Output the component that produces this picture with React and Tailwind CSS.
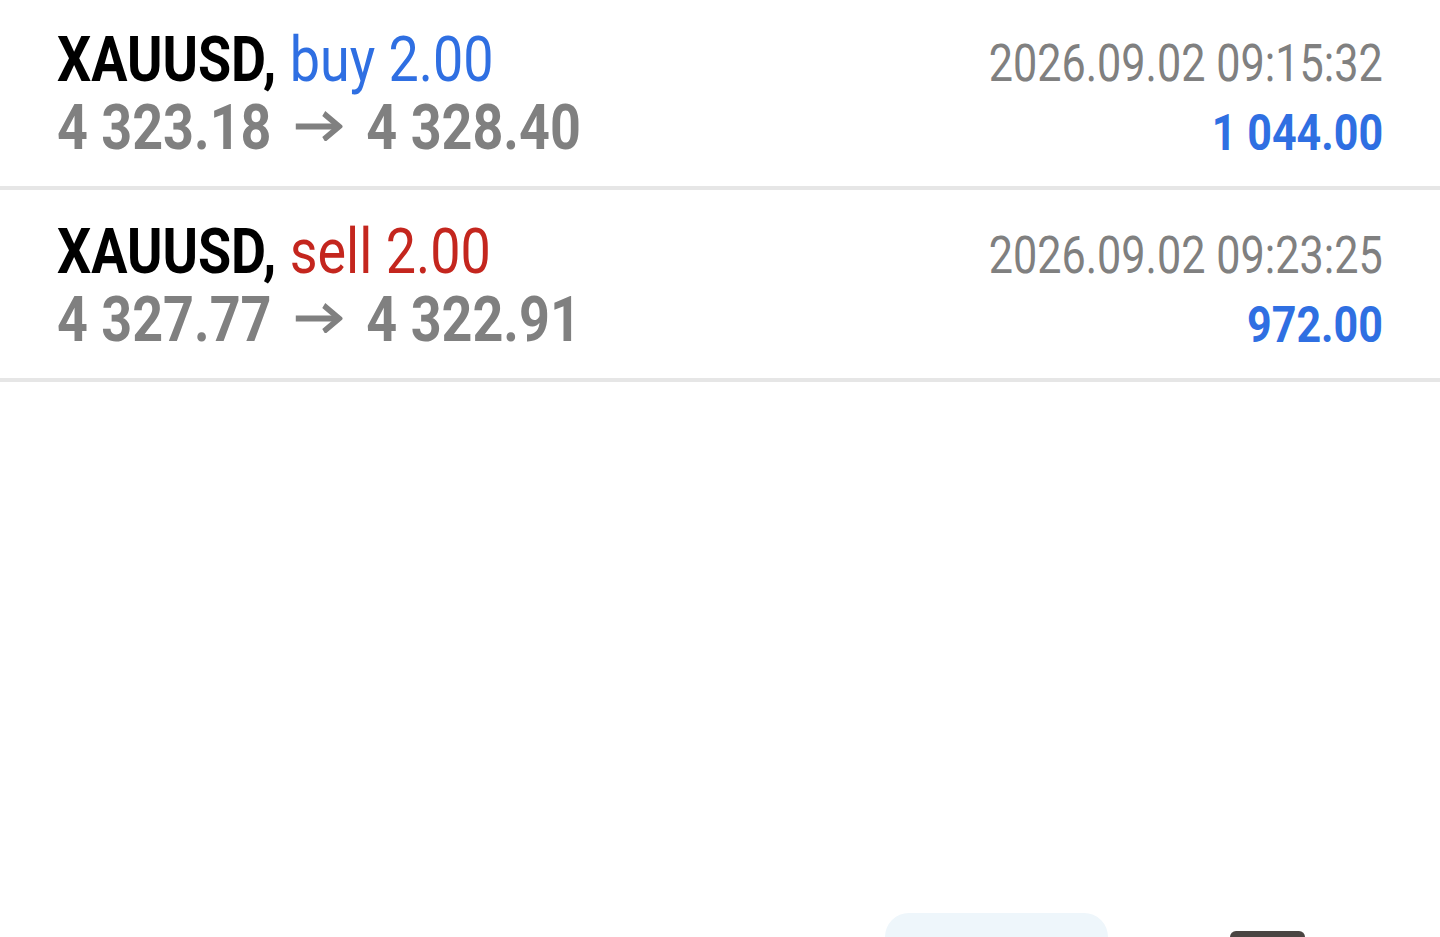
const deals = [
  { symbol: 'XAUUSD', side: 'buy', volume: '2.00', open: '4 323.18', close: '4 328.40', time: '2026.09.02 09:15:32', profit: '1 044.00' },
  { symbol: 'XAUUSD', side: 'sell', volume: '2.00', open: '4 327.77', close: '4 322.91', time: '2026.09.02 09:23:25', profit: '972.00' },
]

// Roboto squeezed sideways to stand in for Roboto Condensed
function Squeeze({ children, className }) {
  return <span className={`inline-block whitespace-nowrap ${className}`}>{children}</span>
}

function Arrow() {
  return (
    <svg width="55" height="30" viewBox="0 0 55 30" className="mx-[28px] inline-block align-[8px]" fill="none" stroke="#808080" strokeWidth="6">
      <path d="M0 15.5H51" />
      <path d="M33 2.5L51 15.5L33 28.5" />
    </svg>
  )
}

function DealRow({ deal, first }) {
  const sideColor = deal.side === 'buy' ? 'text-[#2f6fe2]' : 'text-[#c4261e]'
  return (
    <div className={`flex h-[192px] justify-between border-b-4 border-[#e6e6e6] px-[57px] ${first ? 'mt-[-2px]' : ''}`}>
      <div className="flex flex-col pt-[28px]">
        <div className="h-[68px] text-[63px] leading-[68px]">
          <Squeeze className="origin-left scale-x-[0.855]">
            <span className="font-bold text-black">{deal.symbol},</span>
            <span className={sideColor}> {deal.side} {deal.volume}</span>
          </Squeeze>
        </div>
        <div className="h-[68px] text-[63px] font-bold leading-[68px] text-[#808080]">
          <Squeeze className="origin-left scale-x-[0.855]">
            {deal.open}
            <Arrow />
            {deal.close}
          </Squeeze>
        </div>
      </div>
      <div className="flex flex-col items-end pt-[31px]">
        <div className="h-[70px] text-[52px] leading-[70px] text-[#808080]">
          <Squeeze className="origin-right scale-x-[0.83]">{deal.time}</Squeeze>
        </div>
        <div className="h-[68px] text-[50px] font-bold leading-[68px] text-[#2f6fe2]">
          <Squeeze className="origin-right scale-x-[0.86]">{deal.profit}</Squeeze>
        </div>
      </div>
    </div>
  )
}

export default function App() {
  return (
    <div className="relative h-[937px] w-[1440px] overflow-hidden bg-white font-['Roboto',sans-serif]">
      {deals.map((deal, i) => (
        <DealRow key={deal.time} deal={deal} first={i === 0} />
      ))}
      <div className="absolute bottom-0 left-[885px] h-[24px] w-[223px] rounded-t-[40px] bg-[#eef6fb]" />
      <div className="absolute bottom-0 left-[1230px] h-[6px] w-[75px] rounded-t-[12px] bg-[#4a4542]" />
    </div>
  )
}
